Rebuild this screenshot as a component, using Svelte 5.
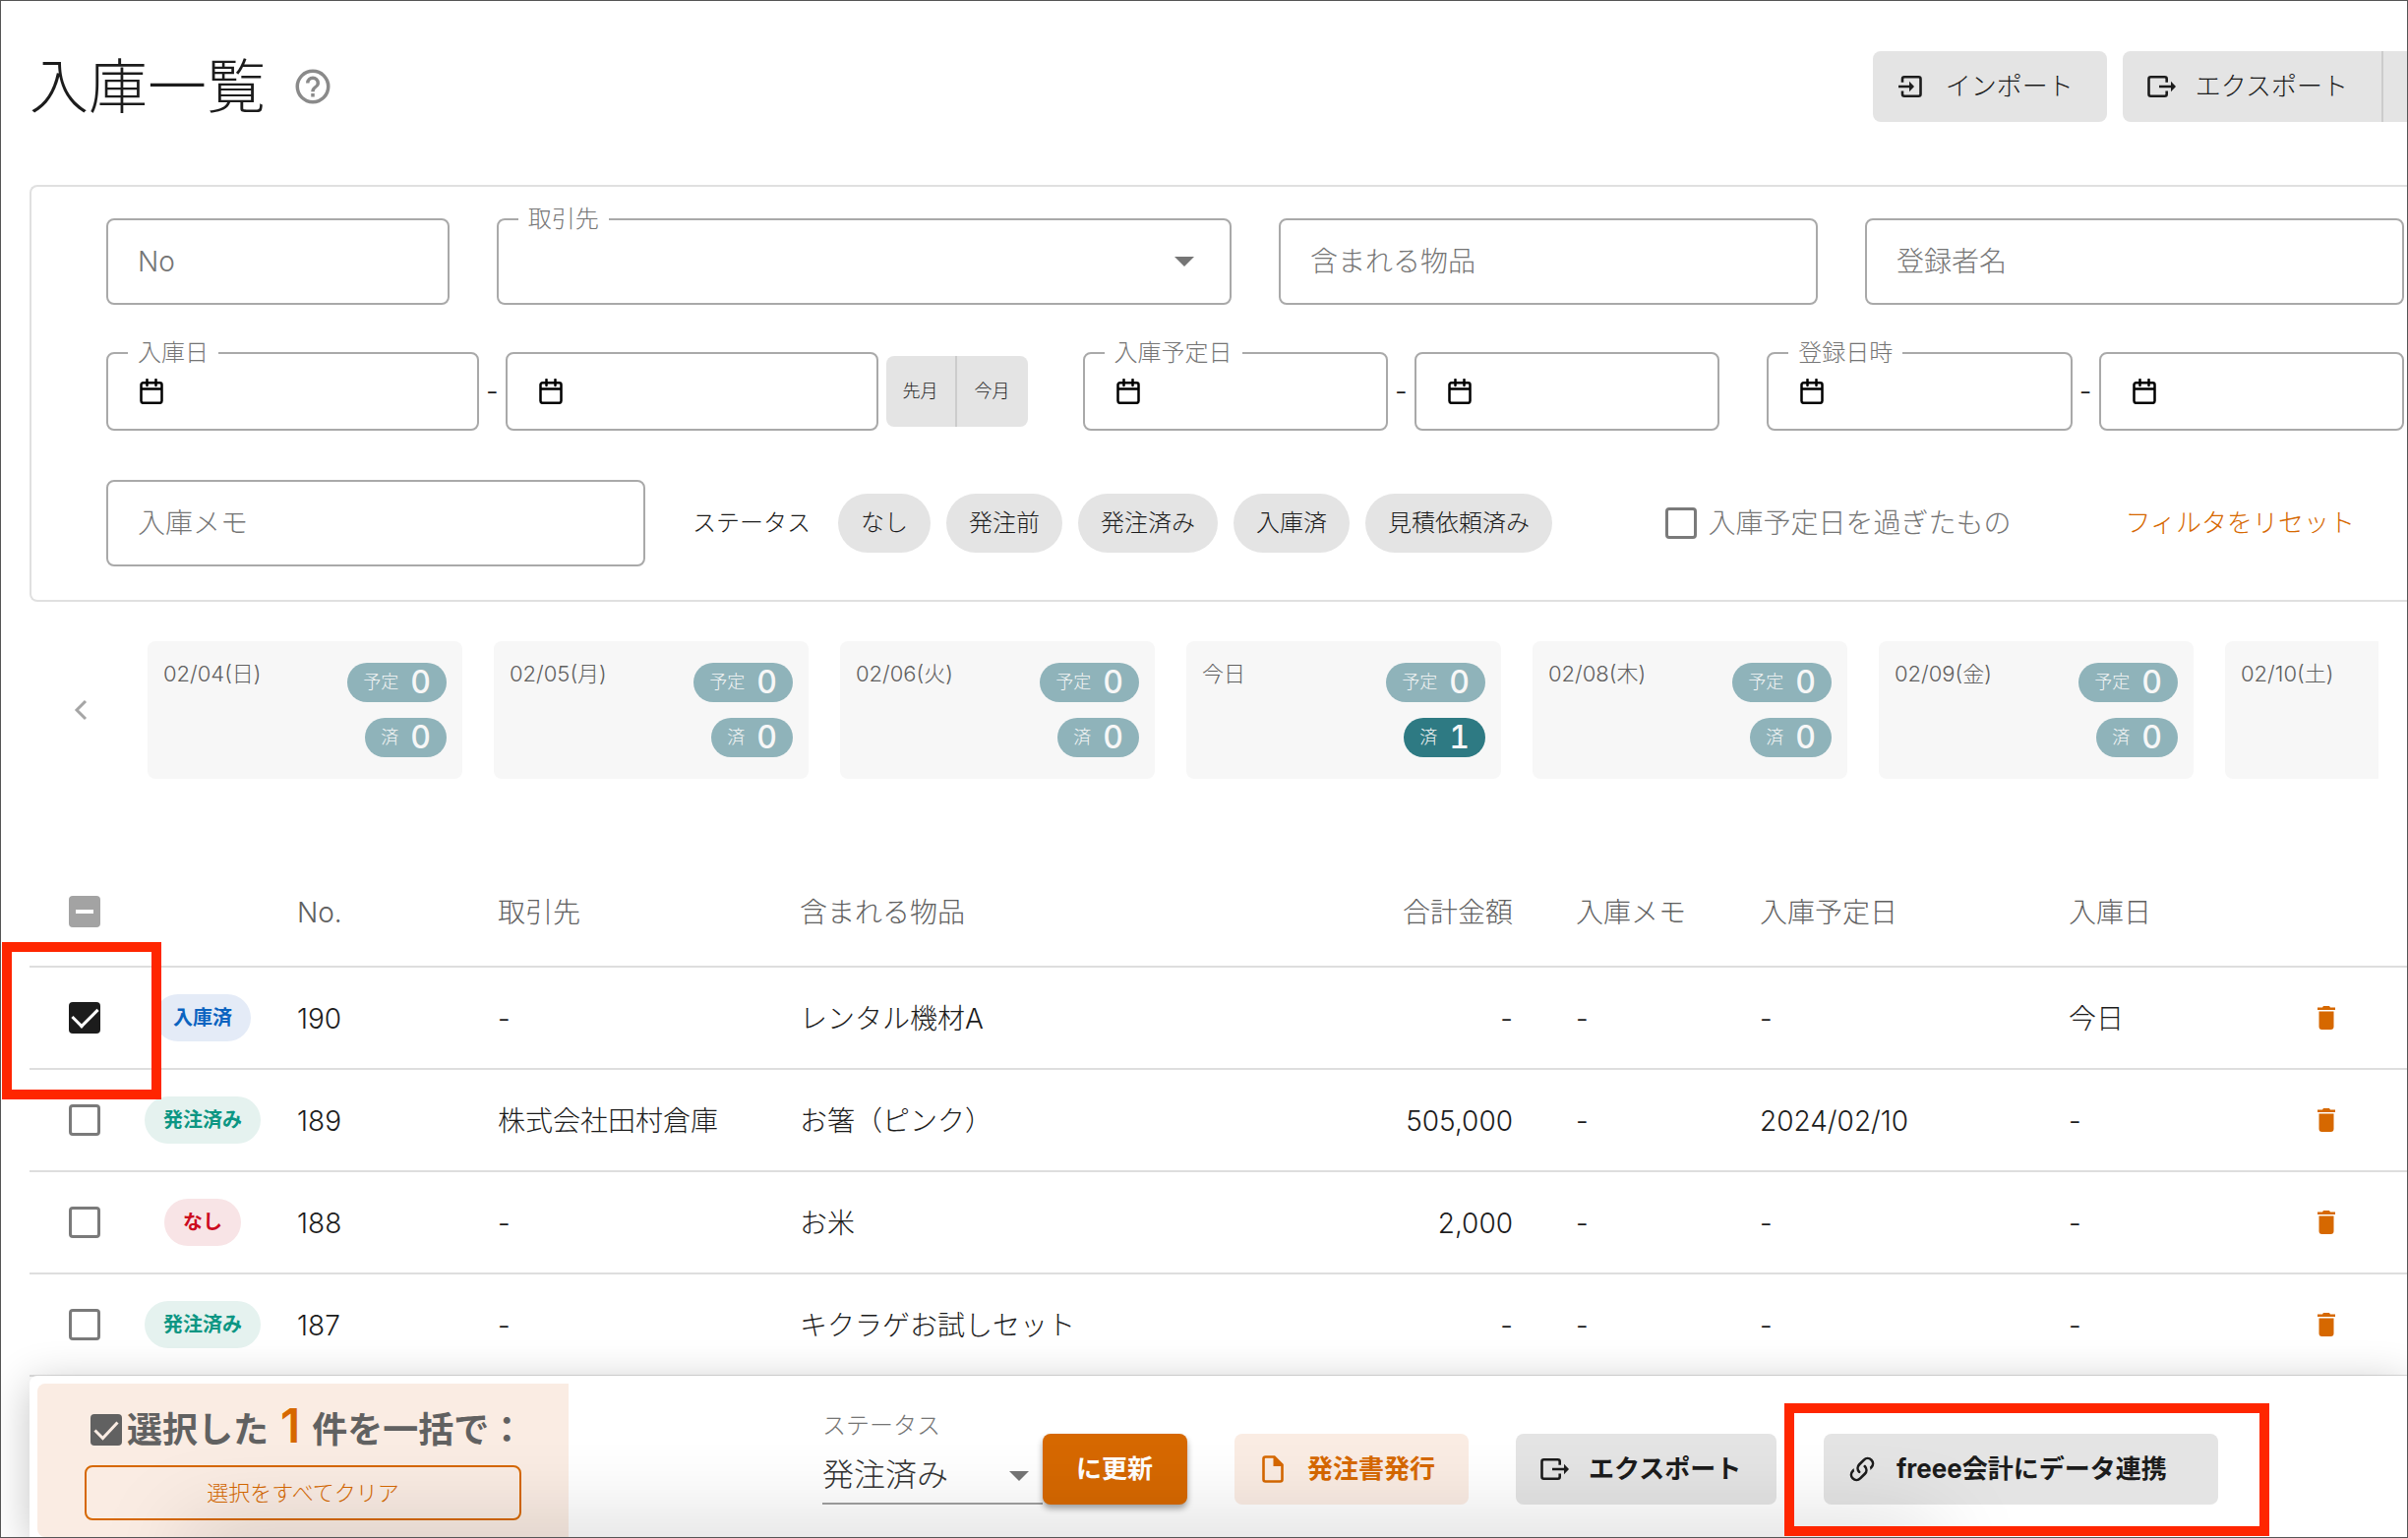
<script lang="ts">
	type Day = { label: string; counts?: { planned: number; done: number } };
	type Tone = 'blue' | 'green' | 'red';
	type Row = {
		no: number;
		status: string;
		tone: Tone;
		supplier: string;
		items: string;
		total: string;
		memo: string;
		plannedOn: string;
		receivedOn: string;
	};

	const statuses = ['なし', '発注前', '発注済み', '入庫済', '見積依頼済み'];

	const days: Day[] = [
		{ label: '02/04(日)', counts: { planned: 0, done: 0 } },
		{ label: '02/05(月)', counts: { planned: 0, done: 0 } },
		{ label: '02/06(火)', counts: { planned: 0, done: 0 } },
		{ label: '今日', counts: { planned: 0, done: 1 } },
		{ label: '02/08(木)', counts: { planned: 0, done: 0 } },
		{ label: '02/09(金)', counts: { planned: 0, done: 0 } },
		{ label: '02/10(土)' }
	];

	const rows: Row[] = [
		{ no: 190, status: '入庫済', tone: 'blue', supplier: '-', items: 'レンタル機材A', total: '-', memo: '-', plannedOn: '-', receivedOn: '今日' },
		{ no: 189, status: '発注済み', tone: 'green', supplier: '株式会社田村倉庫', items: 'お箸（ピンク）', total: '505,000', memo: '-', plannedOn: '2024/02/10', receivedOn: '-' },
		{ no: 188, status: 'なし', tone: 'red', supplier: '-', items: 'お米', total: '2,000', memo: '-', plannedOn: '-', receivedOn: '-' },
		{ no: 187, status: '発注済み', tone: 'green', supplier: '-', items: 'キクラゲお試しセット', total: '-', memo: '-', plannedOn: '-', receivedOn: '-' }
	];

	let selected = $state<number[]>([190]);
	let bulkStatus = $state('発注済み');

	const allSelected = $derived(selected.length === rows.length);
	const someSelected = $derived(selected.length > 0 && !allSelected);

	function toggleAll() {
		selected = allSelected ? [] : rows.map((r) => r.no);
	}
</script>

{#snippet calendarIcon()}
	<svg class="icon-calendar" viewBox="0 0 24 26" aria-hidden="true">
		<path d="M3.5 4.2h17a2 2 0 0 1 2 2v16.6a2 2 0 0 1-2 2h-17a2 2 0 0 1-2-2V6.2a2 2 0 0 1 2-2zM1.5 10.5h21M7.5 1v6M16.5 1v6" />
	</svg>
{/snippet}

{#snippet exportIcon()}
	<svg class="icon" viewBox="0 0 30 28" aria-hidden="true">
		<path class="line" d="M20.7 9.7V6.200a2 2 0 0 0-2-2H4.500a2 2 0 0 0-2 2v15.600a2 2 0 0 0 2 2h14.200a2 2 0 0 0 2-2V18.500M13 14h13" />
		<path d="M25 8.800 30 14l-5 5.200z" />
	</svg>
{/snippet}

{#snippet dateField(id: string, label: string, aria: string)}
	<div class="field field--date">
		{#if label}
			<label class="field__label" for={id}>{label}</label>
		{/if}
		{@render calendarIcon()}
		<input {id} class="field__input" type="text" aria-label={label ? undefined : aria} />
	</div>
{/snippet}

<div class="page">
	<header class="head">
		<h1 class="head__title">入庫一覧</h1>
		<button class="head__help" type="button" aria-label="ヘルプ">
			<svg viewBox="0 0 24 24" aria-hidden="true">
				<path d="M11 18h2v-2h-2v2m1-16A10 10 0 0 0 2 12a10 10 0 0 0 10 10 10 10 0 0 0 10-10A10 10 0 0 0 12 2m0 18c-4.410 0-8-3.590-8-8s3.590-8 8-8 8 3.590 8 8-3.590 8-8 8m0-14a4 4 0 0 0-4 4h2a2 2 0 0 1 2-2 2 2 0 0 1 2 2c0 2-3 1.750-3 5h2c0-2.250 3-2.500 3-5a4 4 0 0 0-4-4z" />
			</svg>
		</button>
		<div class="head__actions">
			<button class="btn btn--gray" type="button">
				<svg class="icon" viewBox="0 0 30 28" aria-hidden="true">
					<path class="line" d="M6 9.700V6.200a2 2 0 0 1 2-2h14.500a2 2 0 0 1 2 2v15.600a2 2 0 0 1-2 2H8a2 2 0 0 1-2-2V18.500M2 14h12" />
					<path d="M13 8.800 18 14l-5 5.200z" />
				</svg>
				インポート
			</button>
			<div class="split">
				<button class="btn btn--gray split__main" type="button">
					{@render exportIcon()}
					エクスポート
				</button>
				<button class="btn btn--gray split__more" type="button" aria-label="その他"></button>
			</div>
		</div>
	</header>

	<section class="filters">
		<div class="filters__row filters__row--text">
			<div class="field"><input class="field__input" type="text" placeholder="No" aria-label="No" /></div>
			<div class="field">
				<label class="field__label" for="supplier">取引先</label>
				<select id="supplier" class="field__input"><option value=""></option></select>
				<svg class="caret" viewBox="0 0 20 10" aria-hidden="true"><path d="M0 0h20L10 10z" /></svg>
			</div>
			<div class="field"><input class="field__input" type="text" placeholder="含まれる物品" aria-label="含まれる物品" /></div>
			<div class="field"><input class="field__input" type="text" placeholder="登録者名" aria-label="登録者名" /></div>
		</div>

		<div class="filters__row filters__row--dates">
			<div class="range">
				{@render dateField('received-from', '入庫日', '')}
				<span class="range__dash">-</span>
				{@render dateField('received-to', '', '入庫日 終了')}
				<div class="months">
					<button type="button">先月</button>
					<button type="button">今月</button>
				</div>
			</div>
			<div class="range">
				{@render dateField('planned-from', '入庫予定日', '')}
				<span class="range__dash">-</span>
				{@render dateField('planned-to', '', '入庫予定日 終了')}
			</div>
			<div class="range">
				{@render dateField('created-from', '登録日時', '')}
				<span class="range__dash">-</span>
				{@render dateField('created-to', '', '登録日時 終了')}
			</div>
		</div>

		<div class="filters__row filters__row--status">
			<div class="field"><input class="field__input" type="text" placeholder="入庫メモ" aria-label="入庫メモ" /></div>
			<div class="status">
				<span class="status__label">ステータス</span>
				{#each statuses as status (status)}
					<button class="status__chip" type="button">{status}</button>
				{/each}
			</div>
			<label class="overdue">
				<input class="check" type="checkbox" />
				入庫予定日を過ぎたもの
			</label>
			<button class="reset" type="button">フィルタをリセット</button>
		</div>
	</section>

	<section class="days">
		<button class="days__prev" type="button" aria-label="前へ">
			<svg viewBox="0 0 14 22" aria-hidden="true"><path d="M12 2 3 11l9 9" /></svg>
		</button>
		<div class="days__list">
			{#each days as day (day.label)}
				<div class="day">
					<span class="day__label">{day.label}</span>
					{#if day.counts}
						<div class="day__counts">
							<span class="pill" class:pill--on={day.counts.planned > 0}>予定 <b>{day.counts.planned}</b></span>
							<span class="pill" class:pill--on={day.counts.done > 0}>済 <b>{day.counts.done}</b></span>
						</div>
					{/if}
				</div>
			{/each}
		</div>
	</section>

	<table class="list">
		<colgroup>
			<col class="col-check" />
			<col class="col-status" />
			<col class="col-no" />
			<col class="col-supplier" />
			<col />
			<col class="col-total" />
			<col class="col-memo" />
			<col class="col-planned" />
			<col class="col-received" />
			<col class="col-delete" />
		</colgroup>
		<thead>
			<tr>
				<th class="center">
					<input
						class="check"
						type="checkbox"
						aria-label="すべて選択"
						checked={allSelected}
						indeterminate={someSelected}
						onchange={toggleAll}
					/>
				</th>
				<th></th>
				<th>No.</th>
				<th>取引先</th>
				<th>含まれる物品</th>
				<th class="right">合計金額</th>
				<th>入庫メモ</th>
				<th>入庫予定日</th>
				<th>入庫日</th>
				<th></th>
			</tr>
		</thead>
		<tbody>
			{#each rows as row, i (row.no)}
				<tr>
					<td class="center" class:marked={i === 0}>
						<input class="check" type="checkbox" aria-label={`${row.no} を選択`} value={row.no} bind:group={selected} />
						{#if i === 0}<span class="marker marker--row"></span>{/if}
					</td>
					<td class="center"><span class="tag tag--{row.tone}">{row.status}</span></td>
					<td>{row.no}</td>
					<td>{row.supplier}</td>
					<td>{row.items}</td>
					<td class="right">{row.total}</td>
					<td>{row.memo}</td>
					<td>{row.plannedOn}</td>
					<td>{row.receivedOn}</td>
					<td class="center">
						<button class="trash" type="button" aria-label="削除">
							<svg viewBox="0 0 18 24" aria-hidden="true">
								<path d="M0 1.500h5L6 0h6l1 1.500h5V4H0zM1.500 5.500h15V21a3 3 0 0 1-3 3h-9a3 3 0 0 1-3-3z" />
							</svg>
						</button>
					</td>
				</tr>
			{/each}
		</tbody>
	</table>

	<footer class="bulk">
		<div class="bulk__summary">
			<p class="bulk__count">
				<svg viewBox="0 0 32 32" aria-hidden="true">
					<rect width="32" height="32" rx="4" />
					<path d="M4.500 16.500l8 8L27.500 8.500" />
				</svg>
				<span>選択した<em>{selected.length}</em>件を一括で：</span>
			</p>
			<button class="bulk__clear" type="button" onclick={() => (selected = [])}>選択をすべてクリア</button>
		</div>
		<div class="bulk__actions">
			<div class="bulk__update">
				<div class="bulk__status">
					<label for="bulk-status">ステータス</label>
					<select id="bulk-status" bind:value={bulkStatus}>
						{#each statuses as status (status)}
							<option>{status}</option>
						{/each}
					</select>
					<svg class="caret" viewBox="0 0 20 10" aria-hidden="true"><path d="M0 0h20L10 10z" /></svg>
				</div>
				<button class="btn btn--primary" type="button">に更新</button>
			</div>
			<button class="btn btn--bold btn--soft" type="button">
				<svg class="icon" viewBox="0 0 30 28" aria-hidden="true">
					<path class="line" d="M5.500 3.500a2 2 0 0 1 2-2h9l8 8v15a2 2 0 0 1-2 2h-15a2 2 0 0 1-2-2z" />
					<path d="M15.500 1.500h2l7 7.500v2h-9z" />
				</svg>
				発注書発行
			</button>
			<button class="btn btn--bold btn--gray btn--export" type="button">
				{@render exportIcon()}
				エクスポート
			</button>
			<div class="linked">
				<button class="btn btn--bold btn--gray btn--link" type="button">
					<svg class="icon" viewBox="1.5 1.5 21 21" aria-hidden="true">
						<path d="M10.590 13.410c.410.390.410 1.030 0 1.420-.390.390-1.030.390-1.420 0a5.003 5.003 0 0 1 0-7.070l3.540-3.540a5.003 5.003 0 0 1 7.070 0 5.003 5.003 0 0 1 0 7.070l-1.490 1.490c.010-.820-.120-1.640-.400-2.420l.470-.480a2.982 2.982 0 0 0 0-4.240 2.982 2.982 0 0 0-4.240 0l-3.530 3.530a2.982 2.982 0 0 0 0 4.240m2.820-4.240c.390-.390 1.030-.390 1.420 0a5.003 5.003 0 0 1 0 7.070l-3.540 3.540a5.003 5.003 0 0 1-7.070 0 5.003 5.003 0 0 1 0-7.070l1.490-1.490c-.010.820.120 1.640.400 2.430l-.470.470a2.982 2.982 0 0 0 0 4.240 2.982 2.982 0 0 0 4.240 0l3.530-3.530a2.982 2.982 0 0 0 0-4.240.973.973 0 0 1 0-1.420z" />
					</svg>
					freee会計にデータ連携
				</button>
				<span class="marker marker--link"></span>
			</div>
		</div>
	</footer>
</div>

<style>
	:global(body) {
		background: #fff;
	}

	.page {
		--accent: #d66800;
		--accent-soft: #faece3;
		--gray: #e4e4e4;
		--line: #e0e0e0;
		--outline: #a9a9a9;
		--text: #1c1c1c;
		--muted: #757575;
		--mark: #ff2600;

		box-sizing: border-box;
		display: flex;
		flex-direction: column;
		min-height: 100vh;
		padding-left: 29px;
		border: 1px solid #555;
		overflow: hidden;
		color: var(--text);
		font-family: Inter, 'Noto Sans CJK JP', sans-serif;
		font-size: 28px;
		font-weight: 300;
		line-height: 40px;
	}

	.page :global(*) {
		box-sizing: border-box;
	}

	button,
	input,
	select {
		margin: 0;
		padding: 0;
		border: 0;
		border-radius: 0;
		background: none;
		color: inherit;
		font: inherit;
	}

	svg {
		display: block;
		flex-shrink: 0;
		fill: currentColor;
	}

	.head {
		display: flex;
		align-items: center;
		padding-top: 51px;
	}

	.head__title {
		margin: 0;
		font-size: 60px;
		font-weight: 300;
		line-height: 72px;
	}

	.head__help {
		margin-left: 27px;
		color: #8a8a8a;
	}

	.head__help svg {
		width: 42px;
		height: 42px;
	}

	.head__actions {
		display: flex;
		gap: 16px;
		margin-left: auto;
	}

	.btn {
		display: flex;
		align-items: center;
		gap: 20px;
		height: 72px;
		padding: 0 34px 0 24px;
		border-radius: 8px;
		font-size: 26px;
		white-space: nowrap;
	}

	.btn--bold {
		font-weight: 700;
	}

	.btn--gray {
		background: var(--gray);
	}

	.btn--soft {
		background: var(--accent-soft);
		color: var(--accent);
	}

	.btn--primary {
		min-width: 147px;
		padding: 0 34px;
		background: var(--accent);
		color: #fff;
		font-weight: 700;
		box-shadow: 0 4px 6px rgba(0, 0, 0, 0.35);
	}

	.btn--export {
		min-width: 265px;
	}

	.btn--link {
		min-width: 401px;
	}

	.icon {
		width: 30px;
		height: 28px;
	}

	.line {
		fill: none;
		stroke: currentColor;
		stroke-width: 2.6;
	}

	.split {
		display: flex;
	}

	.split__main {
		min-width: 262px;
		border-radius: 8px 0 0 8px;
	}

	.split__more {
		width: 26px;
		padding: 0;
		border-left: 2px solid #ccc;
		border-radius: 0;
	}

	.filters {
		display: grid;
		gap: 48px;
		margin-top: 64px;
		padding: 32px 3px 34px 76px;
		border: 2px solid var(--line);
		border-right: 0;
		border-radius: 8px 0 0 8px;
	}

	.filters__row {
		display: grid;
		gap: 48px;
	}

	.filters__row--text {
		grid-template-columns: 7fr 15fr 11fr 11fr;
	}

	.filters__row--dates {
		grid-template-columns: 35fr 24fr 24fr;
	}

	.filters__row--status {
		display: flex;
		align-items: center;
		padding-top: 2px;
	}

	.filters__row--status .field {
		width: 548px;
	}

	.field {
		position: relative;
		display: flex;
		align-items: center;
		min-width: 0;
		height: 88px;
		border: 2px solid var(--outline);
		border-radius: 8px;
	}

	.field--date {
		flex: 1;
		height: 80px;
		padding-left: 32px;
	}

	.field__label {
		position: absolute;
		top: -16px;
		left: 20px;
		padding: 0 10px;
		background: #fff;
		color: var(--muted);
		font-size: 24px;
		line-height: 30px;
	}

	.field__input {
		flex: 1;
		width: 100%;
		min-width: 0;
		height: 100%;
		padding: 0 30px;
		appearance: none;
		outline: 0;
	}

	.field__input::placeholder {
		color: var(--muted);
		opacity: 1;
	}

	.caret {
		width: 20px;
		height: 10px;
		color: #757575;
		pointer-events: none;
	}

	.field .caret {
		margin-right: 36px;
	}

	.icon-calendar {
		width: 24px;
		height: 26px;
		fill: none;
		stroke: #000;
		stroke-width: 2.5;
		stroke-linecap: round;
	}

	.range {
		display: flex;
		align-items: center;
	}

	.range__dash {
		width: 27px;
		text-align: center;
	}

	.months {
		display: flex;
		margin: 0 8px;
	}

	.months button {
		width: 72px;
		height: 72px;
		background: var(--gray);
		font-size: 18px;
	}

	.months button:first-child {
		border-right: 2px solid #ccc;
		border-radius: 8px 0 0 8px;
	}

	.months button:last-child {
		border-radius: 0 8px 8px 0;
	}

	.status {
		display: flex;
		align-items: center;
		gap: 16px;
		font-size: 24px;
	}

	.status__label {
		margin-right: 12px;
	}

	.status__chip {
		height: 60px;
		padding: 0 23px;
		border-radius: 30px;
		background: var(--gray);
	}

	.overdue {
		display: flex;
		align-items: center;
		gap: 12px;
		margin-left: auto;
		color: var(--muted);
	}

	.reset {
		margin: 0 50px 0 68px;
		color: var(--accent);
		font-size: 26px;
	}

	.check {
		display: block;
		width: 32px;
		height: 32px;
		border: 3px solid #7a7a7a;
		border-radius: 4px;
		appearance: none;
	}

	.check:checked,
	.check:indeterminate {
		display: grid;
		place-items: center;
		border: 0;
		background: var(--text);
	}

	.check:indeterminate {
		background: #a3a3a3;
	}

	.check:checked::before {
		content: '';
		width: 22px;
		height: 12px;
		margin-bottom: 8px;
		border: solid #fff;
		border-width: 0 0 3px 3px;
		rotate: -45deg;
	}

	.check:indeterminate::before {
		content: '';
		width: 18px;
		height: 4px;
		background: #fff;
	}

	.days {
		display: flex;
		align-items: center;
		margin-top: 40px;
		padding-right: 29px;
	}

	.days__prev {
		display: flex;
		justify-content: center;
		width: 104px;
		margin-right: 16px;
	}

	.days__prev svg {
		width: 14px;
		height: 22px;
		fill: none;
		stroke: #a5a5a5;
		stroke-width: 3;
	}

	.days__list {
		display: flex;
		flex: 1;
		gap: 32px;
		min-width: 0;
		overflow: hidden;
	}

	.day {
		display: flex;
		flex: 0 0 320px;
		justify-content: space-between;
		height: 140px;
		padding: 0 16px;
		border-radius: 8px;
		background: #f7f7f7;
	}

	.day__label {
		padding-top: 13px;
		color: #606060;
		font-size: 22px;
	}

	.day__counts {
		display: flex;
		flex-direction: column;
		align-items: flex-end;
		gap: 16px;
		padding-top: 22px;
	}

	.pill {
		display: flex;
		align-items: center;
		gap: 12px;
		height: 40px;
		padding: 0 16px;
		border-radius: 20px;
		background: #8fb3ba;
		color: #f7f7f7;
		font-size: 18px;
	}

	.pill--on {
		background: #2e7a83;
	}

	.pill b {
		font-size: 32px;
		font-weight: 500;
		font-variant-numeric: tabular-nums;
	}

	.list {
		width: 100%;
		margin-top: 80px;
		border-collapse: separate;
		border-spacing: 0;
		table-layout: fixed;
	}

	.col-check {
		width: 112px;
	}

	.col-status {
		width: 128px;
	}

	.col-no {
		width: 204px;
	}

	.col-supplier {
		width: 307px;
	}

	.col-total {
		width: 261px;
	}

	.col-memo {
		width: 187px;
	}

	.col-planned {
		width: 314px;
	}

	.col-received {
		width: 212px;
	}

	.col-delete {
		width: 164px;
	}

	th,
	td {
		height: 104px;
		padding: 2px 32px 0;
		border-bottom: 2px solid #dedede;
		font-weight: 300;
		text-align: left;
		white-space: nowrap;
	}

	th {
		height: 112px;
		color: #606060;
	}

	.center {
		padding: 0;
		text-align: center;
	}

	.center .check {
		margin: 0 auto;
	}

	.right {
		text-align: right;
	}

	.tag {
		display: inline-block;
		padding: 0 19px;
		border-radius: 24px;
		font-size: 20px;
		font-weight: 700;
		line-height: 48px;
		vertical-align: middle;
	}

	.tag--blue {
		background: #e4ebf7;
		color: #0b63c0;
	}

	.tag--green {
		background: #e5f2ef;
		color: #0c9683;
	}

	.tag--red {
		background: #f8e4e6;
		color: #cc0a1e;
	}

	.trash {
		display: block;
		margin: 0 auto;
		color: var(--accent);
	}

	.trash svg {
		width: 18px;
		height: 24px;
	}

	.marked,
	.linked {
		position: relative;
	}

	.marker {
		position: absolute;
		z-index: 2;
		border: 10px solid var(--mark);
		pointer-events: none;
	}

	.marker--row {
		inset: -26px -22px -32px -28px;
	}

	.marker--link {
		inset: -31px -52px -32px -40px;
	}

	.bulk {
		position: relative;
		display: flex;
		flex: 1;
		min-height: 164px;
		margin-top: -1px;
		overflow: hidden;
		border-radius: 8px 0 0 0;
		background: #fff;
		box-shadow: 0 8px 44px rgba(0, 0, 0, 0.24);
	}

	/* soft shade that rises from under the bar's lower edge */
	.bulk::after {
		content: '';
		position: absolute;
		right: 480px;
		bottom: -40px;
		left: 160px;
		z-index: 1;
		height: 40px;
		box-shadow: 0 0 90px rgba(0, 0, 0, 0.26);
		pointer-events: none;
	}

	.bulk__summary {
		width: 540px;
		margin: 8px 0 0 8px;
		padding: 27px 48px 0;
		border-radius: 8px 0 0 8px;
		background: var(--accent-soft);
	}

	.bulk__count {
		display: flex;
		align-items: center;
		gap: 5px;
		height: 40px;
		margin: 0 0 16px;
		padding-left: 6px;
		color: #616161;
		font-size: 36px;
		font-weight: 700;
		white-space: nowrap;
	}

	.bulk__count svg {
		width: 32px;
		height: 32px;
	}

	.bulk__count path {
		fill: none;
		stroke: var(--accent-soft);
		stroke-width: 3;
	}

	.bulk__count em {
		margin: 0 12px;
		color: var(--accent);
		font-size: 48px;
		font-style: normal;
		font-weight: 600;
		line-height: 0;
	}

	.bulk__clear {
		width: 100%;
		height: 56px;
		border: 2px solid var(--accent);
		border-radius: 8px;
		color: var(--accent);
		font-size: 22px;
	}

	.bulk__actions {
		display: flex;
		gap: 48px;
		align-items: flex-end;
		align-self: flex-start;
		margin-left: 258px;
		padding-top: 36px;
	}

	.bulk__update {
		display: flex;
		align-items: flex-end;
	}

	.bulk__status {
		display: grid;
		grid-template-columns: 1fr auto;
		align-items: center;
		width: 224px;
		border-bottom: 2px solid #a0a0a0;
	}

	.bulk__status label {
		grid-column: 1 / -1;
		color: var(--muted);
		font-size: 24px;
		line-height: 30px;
	}

	.bulk__status select {
		width: 100%;
		height: 63px;
		padding-top: 7px;
		appearance: none;
		outline: 0;
		color: #333;
		font-size: 32px;
	}

	.bulk__status .caret {
		margin: 8px 14px 0 0;
	}
</style>
